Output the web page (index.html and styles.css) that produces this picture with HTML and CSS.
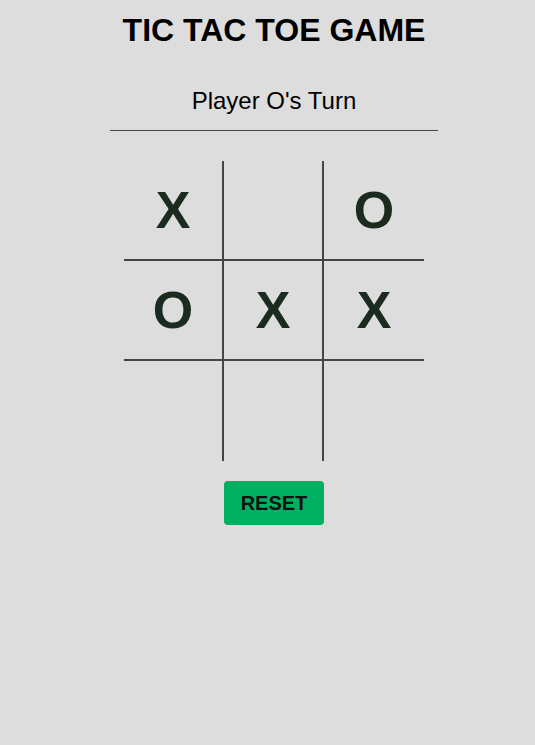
FILE: index.html
```html
<!DOCTYPE html>
<html>
<head>
<meta charset="utf-8">
<title>Tic Tac Toe</title>
<link rel="stylesheet" href="styles.css">
</head>
<body>
<div class="app">
  <h1 class="title">TIC TAC TOE GAME</h1>
  <p class="status">Player O's Turn</p>
  <hr class="divider">
  <div class="board">
    <div class="cell">X</div>
    <div class="cell"></div>
    <div class="cell">O</div>
    <div class="cell">O</div>
    <div class="cell">X</div>
    <div class="cell">X</div>
    <div class="cell"></div>
    <div class="cell"></div>
    <div class="cell"></div>
  </div>
  <button class="reset">RESET</button>
</div>
</body>
</html>
```

FILE: styles.css
```css
html, body {
  margin: 0;
  padding: 0;
  background: #dddddd;
  overflow: hidden;
}
body {
  font-family: "Liberation Sans", Arial, sans-serif;
  color: #000;
}
.app {
  width: 535px;
  box-sizing: border-box;
  padding-left: 13px;
  display: flex;
  flex-direction: column;
  align-items: center;
}
.title {
  margin: 12px 0 0;
  font-size: 32px;
  font-weight: bold;
  line-height: 37px;
}
.status {
  margin: 38px 0 0;
  font-size: 24px;
  line-height: 28px;
}
.divider {
  width: 328px;
  margin: 15px 0 0;
  border: 0;
  height: 1px;
  background: #444;
}
.board {
  margin-top: 30px;
  display: grid;
  grid-template-columns: repeat(3, 100px);
  grid-template-rows: repeat(3, 100px);
}
.cell {
  box-sizing: border-box;
  display: flex;
  align-items: center;
  justify-content: center;
  font-size: 52px;
  font-weight: bold;
  color: #1c2b1f;
}
.cell:nth-child(3n+1), .cell:nth-child(3n+2) {
  border-right: 2px solid #444;
}
.cell:nth-child(-n+6) {
  border-bottom: 2px solid #444;
}
.reset {
  margin-top: 20px;
  width: 100px;
  height: 44px;
  border: 0;
  border-radius: 4px;
  background: #00b062;
  font-family: "Liberation Sans", Arial, sans-serif;
  font-size: 20px;
  font-weight: bold;
  color: #111;
  padding: 0;
}
```
